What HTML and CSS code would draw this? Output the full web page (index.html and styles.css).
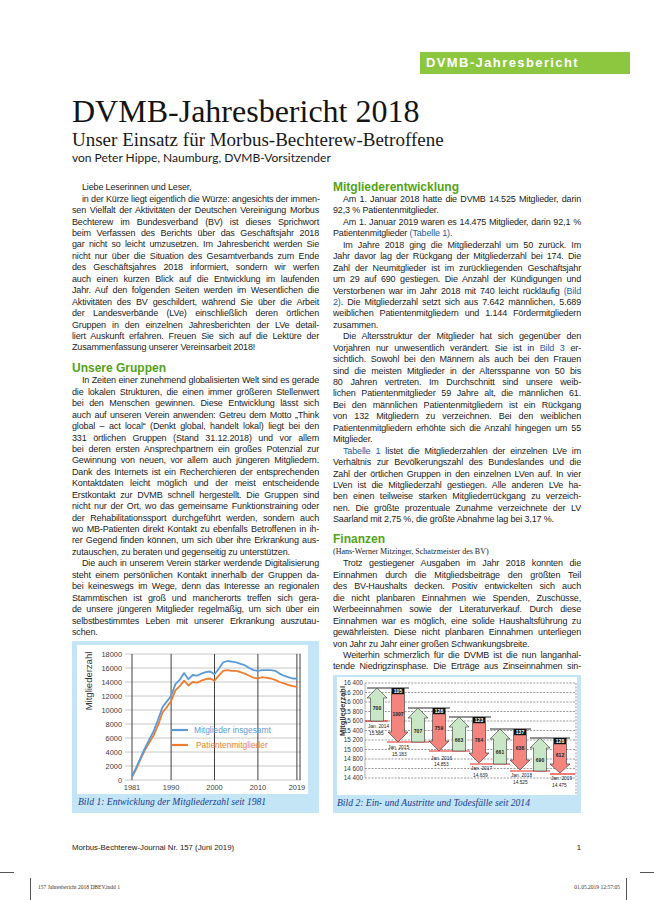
FILE: index.html
```html
<!DOCTYPE html>
<html lang="de">
<head>
<meta charset="utf-8">
<title>DVMB-Jahresbericht 2018</title>
<link rel="stylesheet" href="styles.css">
</head>
<body>
<div class="page">
  <div class="tabrow"><div class="tab">DVMB-Jahresbericht</div></div>
  <header class="head">
    <h1 class="title">DVMB-Jahresbericht 2018</h1>
    <p class="subtitle">Unser Einsatz für Morbus-Bechterew-Betroffene</p>
    <p class="byline">von Peter Hippe, Naumburg, DVMB-Vorsitzender</p>
  </header>

  <main class="columns">
    <section class="col col-left">
      <p class="para"><span class="ln end">Liebe Leserinnen und Leser,</span></p>
      <p class="para">
        <span class="ln">in der Kürze liegt eigentlich die Würze: angesichts der immen-</span>
        <span class="ln">sen Vielfalt der Aktivitäten der Deutschen Vereinigung Morbus</span>
        <span class="ln">Bechterew im Bundesverband (BV) ist dieses Sprichwort</span>
        <span class="ln">beim Verfassen des Berichts über das Geschäftsjahr 2018</span>
        <span class="ln">gar nicht so leicht umzusetzen. Im Jahresbericht werden Sie</span>
        <span class="ln">nicht nur über die Situation des Gesamtverbands zum Ende</span>
        <span class="ln">des Geschäftsjahres 2018 informiert, sondern wir werfen</span>
        <span class="ln">auch einen kurzen Blick auf die Entwicklung im laufenden</span>
        <span class="ln">Jahr. Auf den folgenden Seiten werden im Wesentlichen die</span>
        <span class="ln">Aktivitäten des BV geschildert, während Sie über die Arbeit</span>
        <span class="ln">der Landesverbände (LVe) einschließlich deren örtlichen</span>
        <span class="ln">Gruppen in den einzelnen Jahresberichten der LVe detail-</span>
        <span class="ln">liert Auskunft erfahren. Freuen Sie sich auf die Lektüre der</span>
        <span class="ln end">Zusammenfassung unserer Vereinsarbeit 2018!</span>
      </p>
      <h2 class="sec">Unsere Gruppen</h2>
      <p class="para">
        <span class="ln">In Zeiten einer zunehmend globalisierten Welt sind es gerade</span>
        <span class="ln">die lokalen Strukturen, die einen immer größeren Stellenwert</span>
        <span class="ln">bei den Menschen gewinnen. Diese Entwicklung lässt sich</span>
        <span class="ln">auch auf unseren Verein anwenden: Getreu dem Motto „Think</span>
        <span class="ln">global – act local“ (Denkt global, handelt lokal) liegt bei den</span>
        <span class="ln">331 örtlichen Gruppen (Stand 31.12.2018) und vor allem</span>
        <span class="ln">bei deren ersten Ansprechpartnern ein großes Potenzial zur</span>
        <span class="ln">Gewinnung von neuen, vor allem auch jüngeren Mitgliedern.</span>
        <span class="ln">Dank des Internets ist ein Recherchieren der entsprechenden</span>
        <span class="ln">Kontaktdaten leicht möglich und der meist entscheidende</span>
        <span class="ln">Erstkontakt zur DVMB schnell hergestellt. Die Gruppen sind</span>
        <span class="ln">nicht nur der Ort, wo das gemeinsame Funktionstraining oder</span>
        <span class="ln">der Rehabilitationssport durchgeführt werden, sondern auch</span>
        <span class="ln">wo MB-Patienten direkt Kontakt zu ebenfalls Betroffenen in ih-</span>
        <span class="ln">rer Gegend finden können, um sich über ihre Erkrankung aus-</span>
        <span class="ln end">zutauschen, zu beraten und gegenseitig zu unterstützen.</span>
      </p>
      <p class="para">
        <span class="ln">Die auch in unserem Verein stärker werdende Digitalisierung</span>
        <span class="ln">steht einem persönlichen Kontakt innerhalb der Gruppen da-</span>
        <span class="ln">bei keineswegs im Wege, denn das Interesse an regionalen</span>
        <span class="ln">Stammtischen ist groß und mancherorts treffen sich gera-</span>
        <span class="ln">de unsere jüngeren Mitglieder regelmäßig, um sich über ein</span>
        <span class="ln">selbstbestimmtes Leben mit unserer Erkrankung auszutau-</span>
        <span class="ln end">schen.</span>
      </p>

      <figure class="fig fig-one">
        <svg class="chart chart-one" width="231" height="149" viewBox="0 0 231 149">
          <rect width="231" height="149" fill="#ffffff"/>
          <text class="vlab" transform="translate(15,36) rotate(-90)" text-anchor="middle">Mitgliederzahl</text>
          <g stroke="#c8c8c8" stroke-width="1">
            <line x1="48" y1="9" x2="224" y2="9"/>
            <line x1="48" y1="23" x2="224" y2="23"/>
            <line x1="48" y1="37" x2="224" y2="37"/>
            <line x1="48" y1="51" x2="224" y2="51"/>
            <line x1="48" y1="65" x2="224" y2="65"/>
            <line x1="48" y1="79" x2="224" y2="79"/>
            <line x1="48" y1="93" x2="224" y2="93"/>
            <line x1="48" y1="107" x2="224" y2="107"/>
            <line x1="48" y1="121" x2="224" y2="121"/>
            <line x1="48" y1="135" x2="224" y2="135"/>
          </g>
          <g stroke="#2a2a2a" stroke-width="0.9">
            <line x1="55" y1="9" x2="55" y2="135"/>
            <line x1="94.1" y1="9" x2="94.1" y2="135"/>
            <line x1="137.5" y1="9" x2="137.5" y2="135"/>
            <line x1="180.9" y1="9" x2="180.9" y2="135"/>
            <line x1="219.9" y1="9" x2="219.9" y2="135"/>
            <line x1="223" y1="9" x2="223" y2="135"/>
          </g>
          <g class="ytick" text-anchor="end">
            <text x="45" y="11.6">18000</text>
            <text x="45" y="25.6">16000</text>
            <text x="45" y="39.6">14000</text>
            <text x="45" y="53.6">12000</text>
            <text x="45" y="67.6">10000</text>
            <text x="45" y="81.6">8000</text>
            <text x="45" y="95.6">6000</text>
            <text x="45" y="109.6">4000</text>
            <text x="45" y="123.6">2000</text>
            <text x="45" y="137.6">0</text>
          </g>
          <g class="xtick" text-anchor="middle">
            <text x="55" y="144.5">1981</text>
            <text x="94.1" y="144.5">1990</text>
            <text x="137.5" y="144.5">2000</text>
            <text x="180.9" y="144.5">2010</text>
            <text x="219.9" y="144.5">2019</text>
          </g>
          <polyline fill="none" stroke="#ed7d31" stroke-width="1.8" stroke-linejoin="round"
            points="55,132.2 59.3,123.8 63.7,114 68,104.9 72.4,97.2 76.7,90.2 81,80.4 85.4,67.8 89.7,62.2 94.1,55.9 98.4,45.4 102.7,41.2 107.1,35.6 111.4,40.5 115.8,37 120.1,37.7 124.4,35.6 128.8,34.2 133.1,33.5 137.5,35.6 141.8,30.7 146.1,25.8 150.5,25.1 154.8,25.8 159.2,25.8 163.5,27.2 167.8,28.6 172.2,30.7 176.5,32.8 180.9,33.5 185.2,32.1 189.5,32.8 193.9,33.5 198.2,34.9 202.6,37 206.9,38.4 211.2,39.8 215.6,41.2 219.9,41.9"/>
          <polyline fill="none" stroke="#5b9bd5" stroke-width="1.8" stroke-linejoin="round"
            points="55,131.5 59.3,122.4 63.7,112.6 68,102.8 72.4,94.4 76.7,86 81,74.8 85.4,62.2 89.7,56.6 94.1,51 98.4,39.1 102.7,34.9 107.1,27.9 111.4,34.2 115.8,30 120.1,30.7 124.4,28.6 128.8,27.2 133.1,26.5 137.5,29.3 141.8,23.7 146.1,17.4 150.5,16 154.8,16.7 159.2,17.4 163.5,18.8 167.8,20.2 172.2,23 176.5,25.1 180.9,25.8 185.2,25.1 189.5,25.1 193.9,25.1 198.2,25.8 202.6,28.6 206.9,30.7 211.2,32.1 215.6,33.5 219.9,33.7"/>
          <line x1="95" y1="85" x2="111" y2="85" stroke="#5b9bd5" stroke-width="2.2"/>
          <text class="leg leg-blue" x="117" y="88">Mitglieder insgesamt</text>
          <line x1="95" y1="100" x2="111" y2="100" stroke="#ed7d31" stroke-width="2.2"/>
          <text class="leg leg-orange" x="119" y="103">Patientenmitglieder</text>
        </svg>
        <figcaption class="cap">Bild 1: Entwicklung der Mitgliederzahl seit 1981</figcaption>
      </figure>
    </section>

    <section class="col col-right">
      <h2 class="sec sec-first">Mitgliederentwicklung</h2>
      <p class="para">
        <span class="ln">Am 1. Januar 2018 hatte die DVMB 14.525 Mitglieder, darin</span>
        <span class="ln end">92,3 % Patientenmitglieder.</span>
      </p>
      <p class="para">
        <span class="ln">Am 1. Januar 2019 waren es 14.475 Mitglieder, darin 92,1 %</span>
        <span class="ln end">Patientenmitglieder <span class="ref">(Tabelle 1)</span>.</span>
      </p>
      <p class="para">
        <span class="ln">Im Jahre 2018 ging die Mitgliederzahl um 50 zurück. Im</span>
        <span class="ln">Jahr davor lag der Rückgang der Mitgliederzahl bei 174. Die</span>
        <span class="ln">Zahl der Neumitglieder ist im zurückliegenden Geschäftsjahr</span>
        <span class="ln">um 29 auf 690 gestiegen. Die Anzahl der Kündigungen und</span>
        <span class="ln">Verstorbenen war im Jahr 2018 mit 740 leicht rückläufig <span class="ref">(Bild</span></span>
        <span class="ln"><span class="ref">2)</span>. Die Mitgliederzahl setzt sich aus 7.642 männlichen, 5.689</span>
        <span class="ln">weiblichen Patientenmitgliedern und 1.144 Fördermitgliedern</span>
        <span class="ln end">zusammen.</span>
      </p>
      <p class="para">
        <span class="ln">Die Altersstruktur der Mitglieder hat sich gegenüber den</span>
        <span class="ln">Vorjahren nur unwesentlich verändert. Sie ist in <span class="ref">Bild 3</span> er-</span>
        <span class="ln">sichtlich. Sowohl bei den Männern als auch bei den Frauen</span>
        <span class="ln">sind die meisten Mitglieder in der Altersspanne von 50 bis</span>
        <span class="ln">80 Jahren vertreten. Im Durchschnitt sind unsere weib-</span>
        <span class="ln">lichen Patientenmitglieder 59 Jahre alt, die männlichen 61.</span>
        <span class="ln">Bei den männlichen Patientenmitgliedern ist ein Rückgang</span>
        <span class="ln">von 132 Mitgliedern zu verzeichnen. Bei den weiblichen</span>
        <span class="ln">Patientenmitgliedern erhöhte sich die Anzahl hingegen um 55</span>
        <span class="ln end">Mitglieder.</span>
      </p>
      <p class="para">
        <span class="ln"><span class="ref">Tabelle 1</span> listet die Mitgliederzahlen der einzelnen LVe im</span>
        <span class="ln">Verhältnis zur Bevölkerungszahl des Bundeslandes und die</span>
        <span class="ln">Zahl der örtlichen Gruppen in den einzelnen LVen auf. In vier</span>
        <span class="ln">LVen ist die Mitgliederzahl gestiegen. Alle anderen LVe ha-</span>
        <span class="ln">ben einen teilweise starken Mitgliederrückgang zu verzeich-</span>
        <span class="ln">nen. Die größte prozentuale Zunahme verzeichnete der LV</span>
        <span class="ln end">Saarland mit 2,75 %, die größte Abnahme lag bei 3,17 %.</span>
      </p>
      <h2 class="sec sec-fin">Finanzen</h2>
      <p class="author">(Hans-Werner Mitzinger, Schatzmeister des BV)</p>
      <p class="para">
        <span class="ln">Trotz gestiegener Ausgaben im Jahr 2018 konnten die</span>
        <span class="ln">Einnahmen durch die Mitgliedsbeiträge den größten Teil</span>
        <span class="ln">des BV-Haushalts decken. Positiv entwickelten sich auch</span>
        <span class="ln">die nicht planbaren Einnahmen wie Spenden, Zuschüsse,</span>
        <span class="ln">Werbeeinnahmen sowie der Literaturverkauf. Durch diese</span>
        <span class="ln">Einnahmen war es möglich, eine solide Haushaltsführung zu</span>
        <span class="ln">gewährleisten. Diese nicht planbaren Einnahmen unterliegen</span>
        <span class="ln end">von Jahr zu Jahr einer großen Schwankungsbreite.</span>
      </p>
      <p class="para">
        <span class="ln">Weiterhin schmerzlich für die DVMB ist die nun langanhal-</span>
        <span class="ln">tende Niedrigzinsphase. Die Erträge aus Zinseinnahmen sin-</span>
      </p>

      <figure class="fig fig-two">
        <svg class="chart chart-two" width="240" height="118" viewBox="338 677 240 118">
          <rect x="338" y="677" width="240" height="118" fill="#ffffff"/>
          <text class="vlab2" transform="translate(346,711) rotate(-90)" text-anchor="middle">Mitgliederzahl</text>
          <g stroke="#555" stroke-width="0.6" stroke-dasharray="2 1.3">
            <line x1="366" y1="683" x2="577" y2="683"/>
            <line x1="366" y1="692.5" x2="577" y2="692.5"/>
            <line x1="366" y1="702" x2="577" y2="702"/>
            <line x1="366" y1="711.5" x2="577" y2="711.5"/>
            <line x1="366" y1="721" x2="577" y2="721"/>
            <line x1="366" y1="730.5" x2="577" y2="730.5"/>
            <line x1="366" y1="740" x2="577" y2="740"/>
            <line x1="366" y1="749.5" x2="577" y2="749.5"/>
            <line x1="366" y1="759" x2="577" y2="759"/>
            <line x1="366" y1="768.5" x2="577" y2="768.5"/>
            <line x1="366" y1="778" x2="577" y2="778"/>
            <line x1="577" y1="683" x2="577" y2="795"/>
          </g>
          <line x1="366" y1="683" x2="366" y2="778" stroke="#999" stroke-width="0.8"/>
          <g class="ytick2" text-anchor="end">
            <text x="364" y="685.2">16 400</text>
            <text x="364" y="694.7">16 200</text>
            <text x="364" y="704.2">16 000</text>
            <text x="364" y="713.7">15 800</text>
            <text x="364" y="723.2">15 600</text>
            <text x="364" y="732.7">15 400</text>
            <text x="364" y="742.2">15 200</text>
            <text x="364" y="751.7">15 000</text>
            <text x="364" y="761.2">14 800</text>
            <text x="364" y="770.7">14 600</text>
            <text x="364" y="780.2">14 400</text>
          </g>
          <g stroke="#e32620" stroke-width="1.2">
            <line x1="366" y1="721" x2="389" y2="721"/>
            <line x1="388" y1="742" x2="430" y2="742"/>
            <line x1="430" y1="751" x2="471" y2="751"/>
            <line x1="471" y1="764" x2="511" y2="764"/>
            <line x1="511" y1="771" x2="551" y2="771"/>
            <line x1="551" y1="774" x2="576" y2="774"/>
          </g>
          <g stroke="#111" stroke-width="0.9">
            <line x1="368" y1="688" x2="410" y2="688"/>
            <line x1="409" y1="708" x2="451" y2="708"/>
            <line x1="450" y1="717" x2="492" y2="717"/>
            <line x1="491" y1="729" x2="532" y2="729"/>
            <line x1="531" y1="738" x2="571" y2="738"/>
          </g>
          <g fill="#c9e7c7" stroke="#333" stroke-width="0.6">
            <path d="M378,688 L388,698 L384.5,698 L384.5,721 L371.5,721 L371.5,698 L368,698 Z"/>
            <path d="M419,708 L429,718 L425.5,718 L425.5,742 L412.5,742 L412.5,718 L409,718 Z"/>
            <path d="M460,717 L470,727 L466.5,727 L466.5,751 L453.5,751 L453.5,727 L450,727 Z"/>
            <path d="M501,729 L511,739 L507.5,739 L507.5,764 L494.5,764 L494.5,739 L491,739 Z"/>
            <path d="M541,738 L551,748 L547.5,748 L547.5,771 L534.5,771 L534.5,748 L531,748 Z"/>
          </g>
          <g fill="#f4857e" stroke="#333" stroke-width="0.6">
            <path d="M392.5,694 L405.5,694 L405.5,732 L409,732 L399,742 L389,732 L392.5,732 Z"/>
            <path d="M433.5,714 L446.5,714 L446.5,741 L450,741 L440,751 L430,741 L433.5,741 Z"/>
            <path d="M473.5,723 L486.5,723 L486.5,753 L490,753 L480,763 L470,753 L473.5,753 Z"/>
            <path d="M514.5,735 L527.5,735 L527.5,760 L531,760 L521,770 L511,760 L514.5,760 Z"/>
            <path d="M554.5,744 L567.5,744 L567.5,764 L571,764 L561,773 L551,764 L554.5,764 Z"/>
          </g>
          <g fill="#111">
            <rect x="392.5" y="688" width="13" height="6"/>
            <rect x="433.5" y="708" width="13" height="6"/>
            <rect x="473.5" y="717" width="13" height="6"/>
            <rect x="514.5" y="729" width="13" height="6"/>
            <rect x="554.5" y="738" width="13" height="6"/>
          </g>
          <g class="boxnum" text-anchor="middle">
            <text x="399" y="692.8">105</text>
            <text x="440" y="712.8">128</text>
            <text x="480" y="721.8">123</text>
            <text x="521" y="733.8">137</text>
            <text x="561" y="742.8">128</text>
          </g>
          <g class="arrnum" text-anchor="middle">
            <text x="378" y="709.5">700</text>
            <text x="419" y="732.5">707</text>
            <text x="460" y="741.5">663</text>
            <text x="501" y="753.5">661</text>
            <text x="541" y="761.5">690</text>
            <text x="399" y="715.5">1007</text>
            <text x="440" y="729.5">759</text>
            <text x="480" y="741.5">784</text>
            <text x="521" y="749.5">638</text>
            <text x="561" y="756.5">612</text>
          </g>
          <g class="datelab">
            <text x="369" y="728">Jan. 2014</text>
            <text x="370" y="734.5">15.585</text>
            <text x="389" y="749">Jan. 2015</text>
            <text x="393" y="756">15.183</text>
            <text x="432" y="759.5">Jan. 2016</text>
            <text x="435" y="766">14.853</text>
            <text x="472" y="770">Jan. 2017</text>
            <text x="474" y="777">14.639</text>
            <text x="512" y="777">Jan. 2018</text>
            <text x="514" y="784">14.525</text>
            <text x="552" y="780">Jan. 2019</text>
            <text x="553" y="787">14.475</text>
          </g>
        </svg>
        <figcaption class="cap">Bild 2: Ein- und Austritte und Todesfälle seit 2014</figcaption>
      </figure>
    </section>
  </main>

  <footer class="foot">
    <span class="journal">Morbus-Bechterew-Journal Nr. 157 (Juni 2019)</span>
    <span class="pagenum">1</span>
  </footer>
  <div class="marks"><span class="tick"></span><span class="tick"></span></div>
  <div class="slug">
    <span>157 Jahresbericht 2018 DBEV.indd 1</span>
    <span>01.05.2019 12:57:05</span>
  </div>
</div>
</body>
</html>
```

FILE: styles.css
```css
* { box-sizing: border-box; }

html, body {
  margin: 0;
  padding: 0;
}

body {
  width: 654px;
  height: 900px;
  overflow: hidden;
  background: #ffffff;
  color: #1c1c1c;
  font-family: "Liberation Sans", Arial, sans-serif;
}

.page {
  padding-top: 52px;
}

/* green section tab */
.tabrow {
  display: flex;
  justify-content: flex-end;
  padding-right: 24px;
}

.tab {
  width: 210px;
  height: 22px;
  padding-left: 6px;
  background: #8dc63f;
  color: #ffffff;
  font-weight: bold;
  font-size: 13px;
  line-height: 22px;
  letter-spacing: 1.4px;
}

/* title block */
.head {
  padding-left: 72px;
  margin-top: 19px;
}

.title {
  margin: 0;
  font-family: "Liberation Serif", "Times New Roman", serif;
  font-weight: normal;
  font-size: 32px;
  line-height: 36px;
  color: #141414;
}

.subtitle {
  margin: 0;
  font-family: "Liberation Serif", "Times New Roman", serif;
  font-size: 19px;
  line-height: 22px;
  color: #1a1a1a;
}

.byline {
  margin: 0;
  font-family: Lato, "Open Sans", sans-serif;
  font-size: 12px;
  line-height: 14px;
  color: #1a1a1a;
}

/* two columns */
.columns {
  display: grid;
  grid-template-columns: 247px 248px;
  column-gap: 14px;
  padding-left: 72px;
  margin-top: 15px;
  height: 633px;
}

.col {
  display: flex;
  flex-direction: column;
  min-width: 0;
}

.col-left {
  padding-top: 2.3px;
}

.para {
  margin: 0;
  font-size: 9px;
  line-height: 11.43px;
  letter-spacing: -0.15px;
}

.ln {
  display: block;
  white-space: nowrap;
  text-align: justify;
  text-align-last: justify;
}

.ln.end {
  text-align-last: left;
}

.para .ln:first-child {
  padding-left: 10px;
}

.ref {
  color: #1f5da6;
}

.sec {
  margin: 7.5px 0 0;
  font-size: 12px;
  line-height: 14px;
  font-weight: bold;
  color: #53a318;
}

.sec-first {
  margin-top: 0;
}

.sec-fin {
  margin-top: 6.5px;
}

.author {
  margin: 0;
  font-family: "Liberation Serif", "Times New Roman", serif;
  font-size: 8px;
  line-height: 12.3px;
  color: #222;
}

/* figures */
.fig {
  margin: auto 0 0;
  background: #c3e5f6;
}

.fig-one {
  padding: 4px 11px 5px 5px;
}

.fig-two {
  padding: 2px 4px 4px 4px;
}

.chart {
  display: block;
}

.cap {
  margin-top: 2px;
  font-family: "Liberation Serif", "Times New Roman", serif;
  font-style: italic;
  font-size: 9.6px;
  line-height: 12px;
  color: #1b3c93;
  white-space: nowrap;
}

.fig-one .cap {
  padding-left: 1px;
}

.vlab {
  font-family: "Liberation Sans", Arial, sans-serif;
  font-size: 9.5px;
  fill: #333;
}

.ytick text, .xtick text {
  font-family: "Liberation Sans", Arial, sans-serif;
  font-size: 7.4px;
  fill: #404040;
}

.leg {
  font-family: "Liberation Sans", Arial, sans-serif;
  font-size: 8.4px;
}

.leg-blue { fill: #5b9bd5; }
.leg-orange { fill: #ed7d31; }

.vlab2 {
  font-family: "Liberation Sans", Arial, sans-serif;
  font-size: 7.5px;
  font-weight: bold;
  fill: #333;
}

.ytick2 text {
  font-family: "Liberation Sans", Arial, sans-serif;
  font-size: 6.3px;
  fill: #333;
}

.boxnum text {
  font-family: "Liberation Sans", Arial, sans-serif;
  font-size: 5px;
  font-weight: bold;
  fill: #ffffff;
}

.arrnum text {
  font-family: "Liberation Sans", Arial, sans-serif;
  font-size: 5px;
  font-weight: bold;
  fill: #222;
}

.datelab text {
  font-family: "Liberation Sans", Arial, sans-serif;
  font-size: 4.8px;
  fill: #222;
}

/* footer */
.foot {
  display: flex;
  justify-content: space-between;
  padding: 0 73px 0 72px;
  margin-top: 30px;
  font-size: 7.8px;
  line-height: 10px;
  color: #222;
}

.marks {
  display: flex;
  justify-content: space-between;
  margin-top: 19px;
}

.tick {
  display: block;
  width: 14px;
  height: 1px;
  background: #555;
}

.slug {
  display: flex;
  justify-content: space-between;
  margin: 5px 27px 0 30px;
  height: 22px;
  padding: 6px 6px 0 7px;
  border-left: 1px solid #555;
  border-right: 1px solid #555;
  font-family: "Liberation Serif", "Times New Roman", serif;
  font-size: 5.5px;
  line-height: 6px;
  color: #333;
}
```
